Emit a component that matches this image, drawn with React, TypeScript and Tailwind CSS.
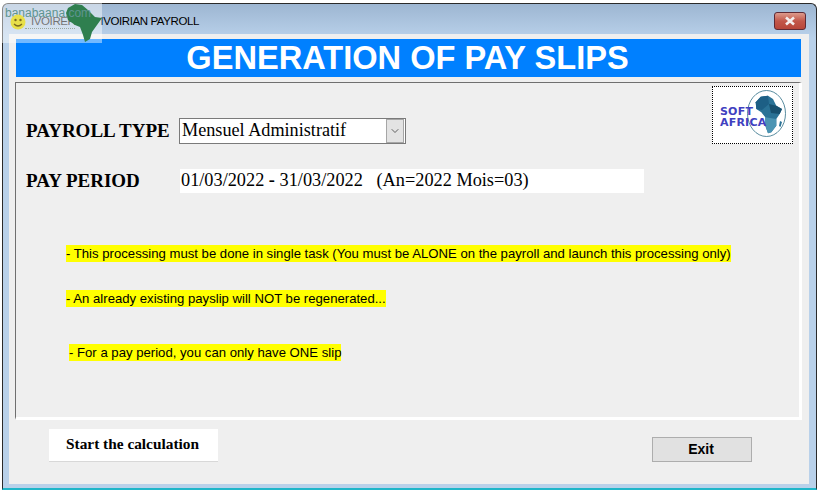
import { ChevronDown } from "lucide-react";

const notes = [
  { text: "- This processing must be done in single task (You must be ALONE on the payroll and launch this processing only)", cls: "mt-[52px] ml-[50px] flex" },
  { text: "- An already existing payslip will NOT be regenerated...", cls: "mt-[28px] ml-[50px] flex" },
  { text: "- For a pay period, you can only have ONE slip", cls: "mt-[37px] ml-[53px] flex" },
];

function SoftAfricaLogo() {
  return (
    <div className="relative w-[81px] h-[58px] bg-white border border-dotted border-black shrink-0">
      <svg viewBox="0 0 40 47" className="absolute left-[34px] top-[3px] w-[40px] h-[47px]">
        <ellipse cx="19.5" cy="23.5" rx="19" ry="23" fill="none" stroke="#2f6f86" strokeWidth="0.8" />
        <path
          d="M13.7 6.7 L21 5.7 L26 9 L29.3 15.7 L35 19 L32.7 24 L29.3 29 L29.3 35.7 L24.3 42.3 L21 43.3 L18.3 35.7 L18.3 27.3 L14.3 22.3 L9.3 19 L8.7 12.3 Z"
          fill="#2a7296"
        />
        <path d="M13.7 6.7 L21 5.7 L22 14 L15 20 L9.3 19 L8.7 12.3 Z" fill="#1d5f85" />
        <path d="M22 14 L29.3 15.7 L35 19 L32.7 24 L24 23 Z" fill="#17506f" />
        <path d="M18.3 27.3 L29.3 29 L29.3 35.7 L24.3 42.3 L21 43.3 L18.3 35.7 Z" fill="#4b94b3" />
        <path d="M33 31 L35 32 L33.5 37 L32 36 Z" fill="#2a7296" />
      </svg>
      <div className="absolute left-[7px] top-[19px] font-['DejaVu_Sans',sans-serif] font-bold text-[11px] leading-[11px] tracking-[0.2px] text-[#4040c0]">
        <div>SOFT</div>
        <div>AFRICA</div>
      </div>
    </div>
  );
}

function Watermark() {
  return (
    <div className="absolute left-0 top-[3px] w-[102px] h-[40px] bg-white/45 overflow-hidden">
      <svg viewBox="0 0 37 40" className="absolute left-[65px] top-0 w-[37px] h-[40px]">
        <path
          d="M10 1 L17 2 L23 7 L30 14 L37 15 L32 22 L27 29 L25 36 L20 39 L18 32 L15 24 L10 22 L3 17 L1 10 L3 5 Z"
          fill="#2f7f4f"
        />
      </svg>
      <div className="absolute left-[5px] top-[2px] text-[12px] leading-[16px] text-[#5f9490]">banabaana.com</div>
      <svg viewBox="0 0 16 16" className="absolute left-[10px] top-[11px] w-[16px] h-[16px]">
        <circle cx="8" cy="8" r="7.5" fill="#e8e04a" />
        <circle cx="5.5" cy="6" r="1.2" fill="#7a6a20" />
        <circle cx="10.5" cy="6" r="1.2" fill="#7a6a20" />
        <path d="M4 10 Q8 14 12 10" fill="none" stroke="#7a6a20" strokeWidth="1.2" />
      </svg>
      <div className="absolute left-[25px] top-[25px] w-[50px] border-t border-dotted border-[#9aa7a0]" />
    </div>
  );
}

export default function App() {
  return (
    <div className="relative w-[820px] h-[493px] bg-white overflow-hidden font-['Liberation_Sans',sans-serif]">
      <div className="ml-[2px] mt-[3px] w-[815px] h-[487px] rounded-t-[6px] border border-[#2a2a2a] border-b-[#1fb6c9] border-b-2 bg-[#b9d1ea] bg-gradient-to-b from-[#9db6d2] to-[#b9d1ea] to-[7%] flex flex-col">
        <div className="h-[30px] flex items-center justify-between pl-[28px] pr-[10px] shrink-0">
          <span className="text-[11.5px] tracking-[-0.4px] text-black mt-[6px]">IVOIREPAIE - IVOIRIAN PAYROLL</span>
          <div className="w-[32px] h-[18px] mt-[3px] rounded-[3px] border border-[#5e2a35] bg-gradient-to-b from-[#dc9a8c] via-[#c2574a] to-[#b8463a] flex items-center justify-center">
            <svg viewBox="0 0 12 10" className="w-[12px] h-[10px]">
              <path d="M2 1.5 L10 8.5 M10 1.5 L2 8.5" stroke="#f4efef" strokeWidth="2.6" />
            </svg>
          </div>
        </div>

        <div className="ml-[6px] w-[800px] h-[450px] bg-[#efefef] pl-[7px] pt-[5px] flex flex-col">
          <div className="w-[785px] h-[38px] pr-[2px] bg-[#0080ff] text-white text-[32.6px] leading-[38px] font-bold text-center shrink-0">
            GENERATION OF PAY SLIPS
          </div>

          <div className="relative ml-[-1px] mt-[5px] w-[787px] h-[338px] border-t border-l border-t-[#6f6f6f] border-l-[#6f6f6f] border-r-[3px] border-b-[3px] border-r-white border-b-white shrink-0">
            <div className="absolute right-[6px] top-[3px]">
              <SoftAfricaLogo />
            </div>

            <div className="flex items-center mt-[35px] ml-[10px] font-['Liberation_Serif',serif] text-black">
              <span className="w-[153px] font-bold text-[19px] leading-[20px]">PAYROLL TYPE</span>
              <div className="w-[227px] h-[26px] bg-white border border-[#7a7a7a] flex items-center justify-between pl-[2px] pr-[1px] text-[18.2px]">
                <span>Mensuel Administratif</span>
                <div className="w-[18px] h-[24px] bg-[#e3e3e3] border border-[#a6a6a6] flex items-center justify-center">
                  <ChevronDown size={12} strokeWidth={1.5} className="text-[#333]" />
                </div>
              </div>
            </div>

            <div className="flex items-center mt-[25px] ml-[10px] font-['Liberation_Serif',serif] text-black">
              <span className="w-[154px] font-bold text-[19px] leading-[24px]">PAY PERIOD</span>
              <div className="w-[464px] h-[24px] bg-white pl-[1px] text-[18.3px] leading-[22px] whitespace-pre">
                01/03/2022 <b>-</b> 31/03/2022   (An=2022 Mois=03)
              </div>
            </div>

            {notes.map((n) => (
              <div key={n.text} className={n.cls}>
                <span className="bg-[#ffff00] text-[13.15px] leading-[17px] text-black">{n.text}</span>
              </div>
            ))}
          </div>

          <div className="flex justify-between mt-[9px] ml-[33px] mr-[57px]">
            <button className="w-[169px] h-[33px] pr-[2px] pb-[3px] bg-white border-b border-b-[#d8d8d8] font-['Liberation_Serif',serif] font-bold text-[15.35px] text-black">
              Start the calculation
            </button>
            <button className="mt-[8px] w-[100px] h-[25px] pr-[2px] pb-[1px] bg-[#e1e1e1] border border-[#adadad] text-[14px] font-bold text-black">
              Exit
            </button>
          </div>
        </div>
      </div>
      <Watermark />
    </div>
  );
}
